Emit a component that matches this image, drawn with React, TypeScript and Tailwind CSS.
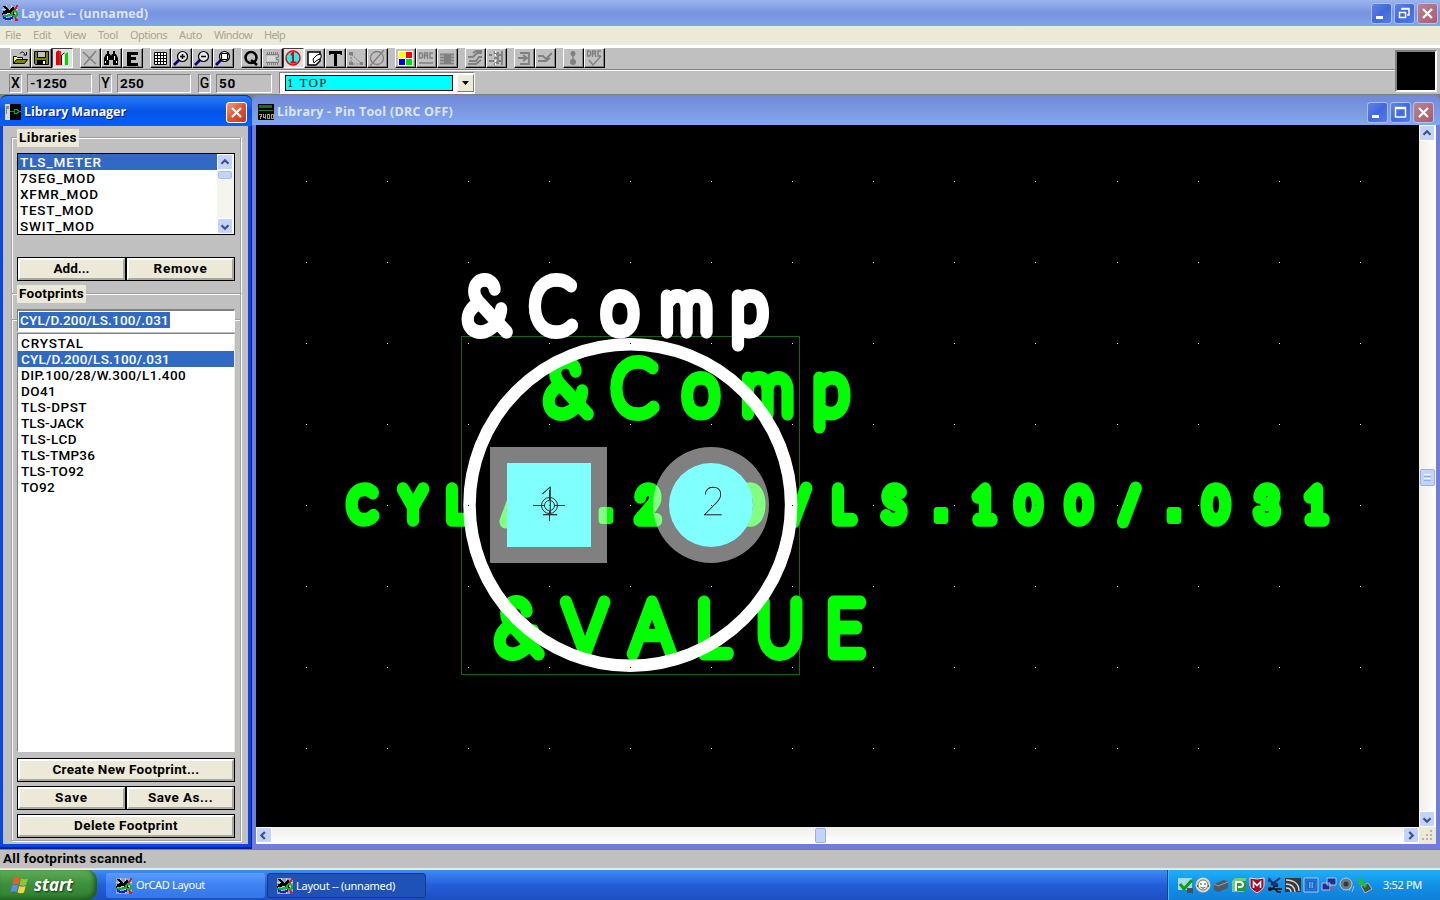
import React, { useLayoutEffect, useRef, useState } from "react";

const sys = "font-['Roboto','Liberation_Sans',sans-serif] font-bold text-[13.5px] leading-4";
const listText = "font-['Roboto','Liberation_Sans',sans-serif] font-medium text-[13.5px] leading-4";
const tahoma = "font-['Noto_Sans','Open_Sans',sans-serif] text-[11px]";
const caption = "font-['Open_Sans','Noto_Sans',sans-serif] text-[12.5px] font-bold";

/* Spreads the letters so that a label takes exactly w pixels. */
function Fit({ w, children, className = "" }: { w: number; children: string; className?: string }) {
  const ref = useRef<HTMLSpanElement>(null);
  const [ls, setLs] = useState(0);
  useLayoutEffect(() => {
    if (ref.current) {
      const nat = ref.current.getBoundingClientRect().width;
      setLs((w - nat) / children.length);
    }
  }, []);
  return (
    <span ref={ref} className={"inline-block whitespace-pre " + className} style={{ letterSpacing: ls + "px" }}>
      {children}
    </span>
  );
}

function AppIcon() {
  return (
    <svg width="16" height="16" viewBox="0 0 16 16" shapeRendering="crispEdges" className="shrink-0">
      <rect width="16" height="16" fill="#8fa0c8" />
      <path d="M0 4h16M0 8h16M4 0v16M9 0v16" stroke="#c8d4ee" />
      <path d="M0 1h3l5 4 2-3h2v5l1 3-3 1-3-3-4 1-2-3 3-1z" fill="#000" />
      <path d="M0 9l4-2" stroke="#000" strokeWidth="2" />
      <path d="M16 0l-3 4v2M13 11l1 4h2" fill="none" stroke="#d81828" strokeWidth="2" />
      <circle cx="12.500" cy="8.500" r="2.500" fill="none" stroke="#18b028" strokeWidth="2" />
      <path d="M0 11h5l5-2" fill="none" stroke="#18b028" strokeWidth="2" />
      <path d="M1 12l3 2h4l3-2" fill="none" stroke="#1020e0" strokeWidth="2" />
    </svg>
  );
}

type CapKind = "min" | "restore" | "max" | "close";
function CapBtn({ kind, active = false }: { kind: CapKind; active?: boolean }) {
  const bg =
    kind === "close"
      ? active
        ? "bg-linear-to-br from-[#f09a80] via-[#dd5433] to-[#c03a18] border-white"
        : "bg-linear-to-br from-[#b98297] to-[#ac5b68] border-[#b4c4f0]"
      : "bg-linear-to-br from-[#6283e4] via-[#4168e0] to-[#4f7cec] border-[#a9c0f4]";
  return (
    <div className={"flex h-[21px] w-[21px] items-center justify-center rounded-[3px] border " + bg}>
      <svg width="19" height="19" viewBox="0 0 19 19" fill="none" stroke="#fff">
        {kind === "min" && <path d="M4 13.500h7" strokeWidth="3" />}
        {kind === "restore" && (
          <>
            <path d="M7 6V4.500h7V11h-2M7 5h7.500" strokeWidth="1.500" />
            <path d="M4.500 8.500h6v5h-6zM4 8.500h7" strokeWidth="1.500" />
          </>
        )}
        {kind === "max" && <path d="M4.500 4.500h10v9.500h-10zM4 5.500h11" strokeWidth="1.500" />}
        {kind === "close" && <path d="M5 5l9 9M14 5l-9 9" strokeWidth="2.200" />}
      </svg>
    </div>
  );
}

const G = "#808080";
const zoomBase = (
  <>
    <path d="M2 16l5-5" stroke="#000080" strokeWidth="2.600" />
    <circle cx="10.500" cy="7.500" r="5" fill="#e8e8e8" stroke="#000" strokeWidth="1.200" />
  </>
);
const tools: React.ReactNode[][] = [
  [
    <g key="open"><path d="M2.500 14.500v-7h3l1 1h5v3" fill="#ffff60" stroke="#000" /><path d="M2.500 14.500l3-4h11l-3 4z" fill="#808000" stroke="#000" /><path d="M9 4.500c1-2 4-2 5 1M15.500 3v3h-3" fill="none" stroke="#000" /></g>,
    <g key="save"><path d="M2.500 2.500h14v13h-13l-1-1z" fill="#808000" stroke="#000" /><path d="M5.500 2.500h8v6h-8z" fill="#c0c0c0" stroke="#000" /><path d="M5 11h9v5H5z" fill="#000" /><path d="M11 12h2v3h-2z" fill="#fff" /></g>,
    <g key="lib"><path d="M3 3l3-2v15H3z" fill="#e00000" /><path d="M6 2h2v14H6z" fill="#f01818" /><path d="M8 6l3-2v12H8z" fill="#fff" /><path d="M8.500 16V6l3-2" stroke="#000" /><path d="M12 5l3-2v13h-3z" fill="#00d800" /></g>,
  ],
  [
    <path key="x" d="M2 3l13 12M15 2L3 16" stroke={G} strokeWidth="1.600" />,
    <g key="find"><path d="M5 2h2v3H5zM11 2h2v3h-2zM4 5h4l1 2 1-2h4l2 4v7h-5v-5H7v5H2V9z" fill="#000" /><path d="M5.500 7v4M12.500 7v4M3.500 12v2M14.500 12v2" stroke="#fff" /></g>,
    <path key="e" d="M4 3h11v3H8v2h5v3H8v3h7v3H4z" fill="#000" />,
  ],
  [
    <g key="grid"><path d="M3 3h13v13H3z" fill="#fff" /><path d="M3.500 3.500h12v12h-12zM3 6.500h13M3 9.500h13M3 12.500h13M6.500 3v13M9.500 3v13M12.500 3v13" fill="none" stroke="#000" /></g>,
    <g key="zi">{zoomBase}<path d="M8 7.500h5M10.500 5v5" stroke="#000" strokeWidth="1.500" /></g>,
    <g key="zo">{zoomBase}<path d="M8 7.500h5" stroke="#000" strokeWidth="1.500" /></g>,
    <g key="za">{zoomBase}<path d="M7.500 4.500h6v6h-6z" fill="#fff" stroke="#000" /></g>,
  ],
  [
    <g key="q"><circle cx="9" cy="8.500" r="5.500" fill="none" stroke="#000" strokeWidth="2.500" /><path d="M9 11l6 5" stroke="#000" strokeWidth="2.500" /></g>,
    <g key="chip"><path d="M3 5.500h12.500v3h-2v2h2v3H3" fill="none" stroke={G} /><path d="M4 7h8v5H4z" fill="#d8d8d8" /><path d="M4.500 3v2M6.500 3v2M8.500 3v2M10.500 3v2M12.500 3v2M14.500 3v2M4.500 14v2M6.500 14v2M8.500 14v2M10.500 14v2M12.500 14v2M14.500 14v2" stroke={G} /></g>,
    <g key="pin"><circle cx="9" cy="9" r="7" fill="#00ffff" stroke="#ff0000" strokeWidth="1.500" /><path d="M7 6l2-2v9M6.500 13.500h6" fill="none" stroke="#f00000" strokeWidth="2" /></g>,
    <g key="obs"><path d="M3 3h12v9l-4 4H3z" fill="#fff" stroke="#000" strokeWidth="1.500" /><path d="M9 14l-1-4 4-4 4-1v4l-5 3z" fill="#fff" stroke="#000" /></g>,
    <path key="t" d="M3 2h13v4h-1l-1-1h-3v12H8V5H5L4 6H3z" fill="#000" />,
    <g key="conn"><path d="M4 5v10h11z" fill="none" stroke={G} strokeDasharray="2 1" /><path d="M2 3h4v3H2zM2 13h4v3H2zM13 13h3v3h-3z" fill={G} /></g>,
    <g key="err"><circle cx="9" cy="9" r="6.500" fill="none" stroke={G} strokeWidth="1.300" /><path d="M2 17L16 1" stroke={G} strokeWidth="1.300" /></g>,
  ],
  [
    <g key="col"><path d="M2 2h15v15H2z" fill="#fff" /><path d="M3 3h6v6H3z" fill="#ffff00" /><path d="M10 3h6v6h-6z" fill="#f00" /><path d="M3 10h6v6H3z" fill="#0000e0" /><path d="M10 10h6v6h-6z" fill="#00e000" /></g>,
    <g key="drc"><path d="M2.500 4v5h2l1-1V5l-1-1zM7.500 10V4h3v2.500h-3M10 7l1 3M16 4h-3v5h3M2 14h14" fill="none" stroke={G} strokeWidth="1.400" /></g>,
    <g key="rec"><path d="M6 5h7v10H6z" fill={G} /><path d="M2 5.500h14M2 8.500h14M2 11.500h14M2 14.500h14" stroke={G} strokeWidth="2" /></g>,
  ],
  [
    <path key="ar" d="M2 8h5l4-4h5M3 12h7l3-4h3M2 15h8l5-4M7 4l3-2h6" fill="none" stroke={G} strokeWidth="1.800" />,
    <g key="sh"><path d="M2 6h3M2 12h5M12 6h3M11 12h4M7 9h4M7 3l3 3M7 16l3-3M11 3v12M15 2v14" stroke={G} strokeWidth="1.800" /><path d="M8.500 2v5M8.500 11v5" stroke="#fff" strokeDasharray="2 1" /></g>,
  ],
  [
    <g key="ed"><path d="M5 4h9v11H5M3 9h8M8 6l4 3-4 3" fill="none" stroke={G} strokeWidth="1.800" /></g>,
    <g key="ad"><path d="M2 7h5l3 3 6-6M2 12h8l4-3" fill="none" stroke={G} strokeWidth="1.800" /></g>,
  ],
  [
    <g key="un"><path d="M9 3v12" stroke={G} strokeWidth="1.500" /><circle cx="9" cy="4.500" r="2.500" fill={G} /><circle cx="9" cy="13" r="3" fill={G} /></g>,
    <g key="dr"><path d="M2.500 2v5h2l1-1V3l-1-1zM7.500 8V2h3v2.500h-3M10 5l1 3M16 2h-3v5h3M4 11l4 5 8-9" fill="none" stroke={G} strokeWidth="1.400" /></g>,
  ],
];

function Field({ label, value, lw, vw }: { label: string; value: string; lw: number; vw: number }) {
  return (
    <div className="flex gap-[5px]">
      <div className="flex h-[19px] w-[13px] items-center justify-center border border-t-[#808080] border-l-[#808080] border-r-white border-b-white font-['Roboto'] text-[14px] font-medium">
        {label}
      </div>
      <div
        className={"h-[19px] border border-t-[#808080] border-l-[#808080] border-r-white border-b-white pl-[2px] " + sys}
        style={{ width: vw }}
      >
        <Fit w={lw}>{value}</Fit>
      </div>
    </div>
  );
}

function Push({ children, w, tw }: { children: string; w: number; tw: number }) {
  return (
    <div className="border border-black" style={{ width: w }}>
      <div
        className={
          "flex h-[22px] items-center justify-center border-2 border-t-white border-l-white border-r-[#aca899] border-b-[#aca899] bg-[#ece9d8] pb-[2px] " + sys
        }
      >
        <Fit w={tw}>{children}</Fit>
      </div>
    </div>
  );
}

function Arrow({ dir }: { dir: "up" | "down" | "left" | "right" }) {
  const d = { up: "M4 9l4-4 4 4", down: "M4 6l4 4 4-4", left: "M9 3.500L5 7.500l4 4", right: "M6 3.500l4 4-4 4" }[dir];
  return (
    <div className="flex h-[16px] w-[16px] shrink-0 items-center justify-center rounded-[2px] border border-white bg-[#c3d3fc]">
      <svg width="15" height="15" viewBox="0 0 16 15" fill="none" stroke="#3f5484" strokeWidth="2.600">
        <path d={d} />
      </svg>
    </div>
  );
}

const libs: [string, number][] = [["TLS_METER", 82], ["7SEG_MOD", 76], ["XFMR_MOD", 79], ["TEST_MOD", 74], ["SWIT_MOD", 75]];
const foots: [string, number][] = [
  ["CRYSTAL", 63], ["CYL/D.200/LS.100/.031", 149], ["DIP.100/28/W.300/L1.400", 165], ["DO41", 35], ["TLS-DPST", 66],
  ["TLS-JACK", 63], ["TLS-LCD", 56], ["TLS-TMP36", 74], ["TLS-TO92", 63], ["TO92", 34],
];

function Legend({ children, w }: { children: string; w: number }) {
  return (
    <div className={"absolute -top-[9px] left-[5px] h-[18px] bg-[#ece9d8] px-[2px] " + sys}>
      <Fit w={w}>{children}</Fit>
    </div>
  );
}

function LibraryManager() {
  return (
    <section className="flex h-[754px] w-[252px] shrink-0 flex-col rounded-t-[7px] border-r border-b-2 border-[#0a1f9a] bg-[#0a46e0]">
      <div className="-mr-px flex h-[31px] shrink-0 items-center rounded-t-[7px] border-t border-[#0831a8] bg-linear-to-b from-[#2a7af8] via-[#0553e6] to-[#0460f8] pt-[2px] pr-[5px] pl-[5px]">
        <svg width="16" height="16" viewBox="0 0 16 16" shapeRendering="crispEdges">
          <path d="M0 0h16v16H0z" fill="#000" />
          <path d="M0 0h5v16H0z" fill="#d8d8d8" />
          <path d="M1 2h3v3H1zM1 5h1v5H1z" fill="#888" />
          <path d="M5 7.500h4M14 7.500h2M9 5.500h3l2 2-2 2H9z" fill="none" stroke="#00a020" />
        </svg>
        <span className={"ml-[3px] flex-1 pt-px text-white [text-shadow:1px_1px_#0a1883] " + caption}>
          <Fit w={102}>Library Manager</Fit>
        </span>
        <CapBtn kind="close" active />
      </div>
      <div className="mr-[3px] mb-[3px] ml-[3px] flex flex-1 flex-col bg-[#c0c0c0] pt-[11px] pr-[7px] pl-[8px]">
        <div className="relative h-[156px] border border-b-0 border-[#a0a0a0] px-[5px] pt-[15px] shadow-[inset_1px_1px_#fff,1px_0_#fff]">
          <Legend w={58}>Libraries</Legend>
          <div className="flex h-[82px] w-[218px] border border-black bg-white">
            <div className="flex-1">
              {libs.map(([t, w], i) => (
                <div key={t} className={"h-4 pl-[2px] " + listText + (i === 0 ? " bg-[#316ac5] text-white" : "")}>
                  <Fit w={w}>{t}</Fit>
                </div>
              ))}
            </div>
            <div className="flex w-[17px] flex-col bg-[#f5f4ee]">
              <Arrow dir="up" />
              <div className="mt-px ml-px h-[8px] w-[14px] rounded-[2px] border border-[#a8bff0] bg-[#c3d3fc]" />
              <div className="flex-1" />
              <Arrow dir="down" />
            </div>
          </div>
          <div className="mt-[22px] flex">
            <Push w={109} tw={36}>Add...</Push>
            <Push w={109} tw={54}>Remove</Push>
          </div>
        </div>
        <div className="relative h-[548px] border border-[#a0a0a0] px-[5px] pt-[15px] shadow-[inset_1px_1px_#fff,1px_1px_#fff]">
          <Legend w={65}>Footprints</Legend>
          <div className="absolute top-[25px] right-0 left-0 h-[2px] border-t border-b border-t-[#a0a0a0] border-b-white" />
          <div className="relative flex h-[23px] w-[218px] items-center border border-t-2 border-t-[#808080] border-l-[#808080] border-r-white border-b-white bg-white pb-[2px] pl-[1px]">
            <span className={"flex h-4 bg-[#316ac5] px-px text-white " + listText}>
              <Fit w={149}>CYL/D.200/LS.100/.031</Fit>
            </span>
          </div>
          <div className="mt-px h-[419px] w-[218px] border border-t-[#808080] border-l-[#808080] border-r-[#ece9d8] border-b-white bg-white pt-px">
            {foots.map(([t, w], i) => (
              <div key={t} className={"h-4 pl-[3px] " + listText + (i === 1 ? " bg-[#316ac5] text-white" : "")}>
                <Fit w={w}>{t}</Fit>
              </div>
            ))}
          </div>
          <div className="mt-[6px] flex flex-col gap-[4px]">
            <Push w={218} tw={147}>Create New Footprint...</Push>
            <div className="flex">
              <Push w={109} tw={33}>Save</Push>
              <Push w={109} tw={65}>Save As...</Push>
            </div>
            <Push w={218} tw={104}>Delete Footprint</Push>
          </div>
        </div>
      </div>
    </section>
  );
}

/* Silkscreen lettering: a hairline face under a heavy round pen, every
   character centred on its own x, condensed horizontally by SX. */
const SX = 0.88;
function Silk({ text, xs, y, size, stroke, fill }: { text: string; xs: number[]; y: number; size: number; stroke: number; fill: string }) {
  return (
    <text
      transform={"scale(" + SX + " 1)"}
      y={y}
      fill={fill}
      stroke={fill}
      strokeWidth={stroke}
      strokeLinejoin="round"
      strokeLinecap="round"
      textAnchor="middle"
      fontFamily="Lato"
      fontWeight="100"
      fontSize={size}
    >
      {text.split("").map((c, i) =>
        c === "." ? (
          <tspan key={i} x={xs[i] / SX} fontFamily="Liberation Sans" fontWeight="700" fontSize={size * 1.4} strokeWidth={8}>
            {c}
          </tspan>
        ) : (
          <tspan key={i} x={xs[i] / SX}>
            {c}
          </tspan>
        )
      )}
    </text>
  );
}

const dotX = [306, 387, 468, 549, 630, 711, 792, 873, 954, 1035, 1117, 1198, 1279, 1360];
const dotY = [181, 262, 343, 424, 505, 586, 667, 748];

function Board() {
  return (
    <svg width="1163" height="702" viewBox="256 125 1163 702" className="block bg-black">
      <g className="isolate">
        <rect x="461.500" y="336.500" width="338" height="338" fill="none" stroke="#146414" />
        <Silk text="&Comp" xs={[567, 634, 701, 767.5, 831]} y={414.5} size={75} stroke={13} fill="#00ff00" />
        <Silk text="&VALUE" xs={[518, 585, 652, 712.5, 780, 845]} y={654.5} size={75} stroke={13} fill="#00ff00" />
        <Silk
          text="CYL/D.200/LS.100/.031"
          xs={[362, 413, 457, 512, 560, 606, 648, 700, 750, 800, 843, 894, 941, 984, 1028.500, 1079, 1129.500, 1174, 1216, 1267, 1316]}
          y={520.5} size={44} stroke={13.5} fill="#00ff00"
        />
        <g fill="#808080" className="mix-blend-screen">
          <rect x="490" y="447" width="117" height="116" />
          <circle cx="711" cy="505" r="58" />
        </g>
        <rect x="507" y="463" width="84" height="84" fill="#80ffff" />
        <circle cx="711" cy="505" r="42" fill="#80ffff" />
        <circle cx="630.300" cy="505" r="160.800" fill="none" stroke="#fff" strokeWidth="12.500" />
        <Silk text="&Comp" xs={[486, 552.5, 620, 686.5, 749.5]} y={332.5} size={75} stroke={13} fill="#fff" />
        <g fill="#000" stroke="#000" strokeWidth=".3" fontFamily="Lato" fontSize="40" fontWeight="100" textAnchor="middle">
          <text x="549" y="515">1</text>
          <text x="713" y="515">2</text>
        </g>
        <g fill="none" stroke="#303030">
          <circle cx="549.500" cy="505.500" r="8" />
          <circle cx="549.500" cy="505.500" r="5" />
          <path d="M533 505.500h12M554 505.500h11M549.500 490v10M549.500 511v10M544 514.500h10" />
        </g>
        <g fill="#fff" className="mix-blend-difference">
          {dotY.map((y) => dotX.map((x) => <rect key={x + "-" + y} x={x} y={y} width="1" height="1" />))}
        </g>
      </g>
    </svg>
  );
}

function PinWindow() {
  return (
    <section className="flex h-[754px] flex-1 flex-col rounded-t-[7px] bg-[#6f7fd8] pr-[4px] pl-[4px]">
      <div className="-mx-[4px] flex h-[30px] shrink-0 items-center rounded-t-[7px] bg-linear-to-b from-[#7088d8] via-[#7a98e2] to-[#82a7ed] pt-[4px] pr-[6px] pl-[6px]">
        <svg width="16" height="16" viewBox="0 0 16 16" shapeRendering="crispEdges">
          <path d="M0 0h16v16H0z" fill="#000" />
          <path d="M1 1h13v3H1z" fill="#206828" />
          <path d="M1 6.500h14" stroke="#208830" />
          <path d="M1 10h3l-2 5M5 10v3h3M7 10v5M9 10h2v4H9zM13 10h2v4h-2z" fill="none" stroke="#b8a830" />
        </svg>
        <span className={"ml-[3px] flex-1 pt-px text-[#dbe5fb] " + caption}>
          <Fit w={176}>Library - Pin Tool (DRC OFF)</Fit>
        </span>
        <div className="flex gap-[2px]">
          <CapBtn kind="min" />
          <CapBtn kind="max" />
          <CapBtn kind="close" />
        </div>
      </div>
      <div className="flex h-[702px]">
        <Board />
        <div className="flex w-[17px] flex-col bg-linear-to-r from-[#f0efe8] to-white">
          <Arrow dir="up" />
          <div className="mt-[328px] ml-px flex h-[17px] w-[15px] flex-col items-center justify-center gap-px rounded-[2px] border border-[#98b0e8] bg-[#c3d3fc]">
            <div className="h-px w-[7px] bg-[#eef4fe]" />
            <div className="h-px w-[7px] bg-[#8cb0f8]" />
            <div className="h-px w-[7px] bg-[#eef4fe]" />
            <div className="h-px w-[7px] bg-[#8cb0f8]" />
          </div>
          <div className="flex-1" />
          <Arrow dir="down" />
        </div>
      </div>
      <div className="flex h-[17px] w-[1180px] bg-linear-to-b from-[#f0efe8] to-white">
        <Arrow dir="left" />
        <div className="mt-px ml-[543px] h-[15px] w-[11px] rounded-[2px] border border-[#98b0e8] bg-[#c3d3fc]" />
        <div className="flex-1" />
        <Arrow dir="right" />
        <div className="flex w-[17px] items-end justify-end bg-[#ece9d8] p-[2px]">
          <svg width="12" height="12" fill="#b8b4a2">
            <path d="M8 0h2v2H8zM4 4h2v2H4zM8 4h2v2H8zM0 8h2v2H0zM4 8h2v2H4zM8 8h2v2H8z" />
          </svg>
        </div>
      </div>
    </section>
  );
}

const tray = [
  <g key="a"><path d="M1 1h14v12H1z" fill="#a8d8e8" /><path d="M10 11h6v5h-6z" fill="#405060" /><path d="M3 7l4 5 8-9" fill="none" stroke="#08a010" strokeWidth="3" /></g>,
  <g key="b"><circle cx="8" cy="8" r="7.500" fill="#d8d8c0" /><path d="M2 9h12" stroke="#706030" strokeWidth="2" /><circle cx="8" cy="8" r="5" fill="#fff" stroke="#807850" /><path d="M6 6v2M10 6v2M5.500 10c2 1.500 3 1.500 5 0" stroke="#444" fill="none" /></g>,
  <g key="c"><path d="M1 7l10-4 4 2v6L5 15l-4-2z" fill="#505860" /><path d="M1 7l4 2 10-4" stroke="#98a0a8" fill="none" /></g>,
  <g key="d"><path d="M1 4l3-3h11v12l-3 2H1z" fill="#78c880" /><path d="M4 4h11v10H4z" fill="#289838" /><path d="M5 14V5h4c4 0 4 5 0 5H7" fill="none" stroke="#fff" strokeWidth="2" /></g>,
  <g key="e"><path d="M1 1l7 1 7-1v7c0 4-4 6-7 8-3-2-7-4-7-8z" fill="#a80820" stroke="#e8e8e8" /><path d="M4.500 11V5L8 8.500 11.500 5v6" fill="none" stroke="#fff" strokeWidth="1.600" /></g>,
  <g key="f"><path d="M2 1l5 8M13 1L4 8M1 3l10 5" stroke="#0c3070" strokeWidth="2" /><path d="M1 12h14M5 12l3-3h3M8 12l3 3h3" fill="none" stroke="#101010" strokeWidth="1.500" /><circle cx="3" cy="12" r="2" fill="#101010" /></g>,
  <g key="g"><path d="M0 1h16v14H0z" fill="#383838" /><path d="M1 3c8 0 13 4 13 11M1 7c5 0 9 3 9 8M1 11c3 0 5 1 5 4" fill="none" stroke="#d8d8d8" strokeWidth="1.500" /></g>,
  <g key="h"><path d="M1 1h14v14H1z" fill="#1060b8" stroke="#a8d0f8" /><path d="M3 3h10v10H3z" fill="#1868c8" stroke="#2c80d8" /><path d="M6 6h4M6 8h4M6 10h4" stroke="#c0e0ff" strokeDasharray="1 .5" /></g>,
  <g key="i"><path d="M6 1h9v7H6zM1 6h8v7H1z" fill="#203090" stroke="#b8c0e0" /><path d="M9 10h5v4H9z" fill="#6070b0" /></g>,
  <g key="j"><circle cx="7" cy="7" r="6" fill="#707880" stroke="#c0c8d0" /><circle cx="7" cy="7" r="2.500" fill="#303840" /><path d="M10 14l2-4M13 15l2-6" stroke="#a0c0f0" /></g>,
  <g key="k"><path d="M4 9l7-3 4 6-7 4z" fill="#405048" stroke="#b0b8b0" /><path d="M1 1l6 2-1 2 4 3-2 3-4-4-2 1z" fill="#20c030" /></g>,
];

export default function App() {
  return (
    <div className="flex h-[900px] w-[1440px] flex-col overflow-hidden bg-[#c0c0c0] text-black">
      <header className="flex h-[26px] shrink-0 items-center bg-linear-to-b from-[#9db5ee] via-[#7893df] to-[#80a5ec] pr-[2px] pl-[2px]">
        <AppIcon />
        <span className={"ml-[3px] flex-1 pt-[2px] text-[#dbe5fb] " + caption}>
          <Fit w={127}>Layout -- (unnamed)</Fit>
        </span>
        <div className="flex gap-[2px]">
          <CapBtn kind="min" />
          <CapBtn kind="restore" />
          <CapBtn kind="close" />
        </div>
      </header>
      <nav className={"flex h-[19px] shrink-0 items-center bg-[#ece9d8] pl-[5px] text-[#a9a594] " + tahoma}>
        <Fit w={16} className="mr-[12px]">File</Fit>
        <Fit w={18} className="mr-[13px]">Edit</Fit>
        <Fit w={22} className="mr-[12px]">View</Fit>
        <Fit w={20} className="mr-[12px]">Tool</Fit>
        <Fit w={37} className="mr-[12px]">Options</Fit>
        <Fit w={23} className="mr-[12px]">Auto</Fit>
        <Fit w={38} className="mr-[12px]">Window</Fit>
        <Fit w={21}>Help</Fit>
      </nav>
      <div className="flex h-[49px] shrink-0 border-t-[3px] border-white">
        <div className="flex flex-1 flex-col">
          <div className="flex h-[22px] gap-[7px] border-b border-[#808080] pl-[10px]">
            {tools.map((grp, gi) => (
              <div key={gi} className="flex">
                {grp.map((ic, i) => {
                  const pressed = (gi === 0 && i === 2) || (gi === 3 && i === 2);
                  return (
                    <div
                      key={i}
                      className={
                        "h-[20px] w-[21px] border " +
                        (pressed
                          ? "border-t-[#404040] border-l-[#404040] border-r-white border-b-white bg-[#e0e0e0]"
                          : "border-t-white border-l-white border-r-black border-b-black bg-[#c0c0c0] shadow-[inset_-1px_-1px_#808080]")
                      }
                    >
                      <svg width="18" height="18" viewBox="0 0 18 18" fill="none">{ic}</svg>
                    </div>
                  );
                })}
              </div>
            ))}
          </div>
          <div className="flex h-[24px] items-start border-t border-white pt-px pl-[9px]">
            <div className="flex gap-[7px] pt-[2px]">
              <Field label="X" value="-1250" lw={37} vw={65} />
              <Field label="Y" value="250" lw={24} vw={74} />
              <Field label="G" value="50" lw={17} vw={56} />
            </div>
            <div className="ml-[7px] flex h-[22px] w-[196px] border border-t-[#808080] border-l-[#808080] border-r-white border-b-white bg-white py-px">
              <div className="mt-px ml-[5px] h-[16px] w-[168px] border border-black bg-[#00ffff] pl-px font-['Liberation_Serif'] text-[13px] leading-[14px]">
                <Fit w={41}>1 TOP</Fit>
              </div>
              <div className="ml-auto flex h-[18px] w-[17px] items-center justify-center border border-t-white border-l-white border-r-[#808080] border-b-[#808080] bg-[#ece9d8]">
                <svg width="7" height="4"><path d="M0 0h7L3.500 4z" fill="#000" /></svg>
              </div>
            </div>
          </div>
        </div>
        <div className="mt-[2px] mr-[3px] h-[42px] w-[42px] border-2 border-t-[#808080] border-l-[#808080] border-r-white border-b-white bg-black" />
      </div>
      <main className="flex h-[755px] shrink-0 bg-[#808080] pt-px pr-[3px]">
        <LibraryManager />
        <PinWindow />
      </main>
      <footer className={"flex h-[21px] shrink-0 items-center border-t border-b-2 border-t-[#808080] border-b-[#ece9d8] pb-[2px] pl-[3px] " + sys}>
        <Fit w={144}>All footprints scanned.</Fit>
      </footer>
      <div className="flex h-[30px] shrink-0 bg-linear-to-b from-[#3f8cf3] via-[#245edb] to-[#1d4fc0]">
        <div className="flex w-[97px] items-center rounded-r-[10px] bg-linear-to-b from-[#5eac56] via-[#3c8f3c] to-[#2f7f30] pl-[10px] shadow-[inset_-3px_-2px_4px_#1e5c1e]">
          <svg width="20" height="19" viewBox="0 0 20 19">
            <path d="M4 2c2-2 4-1 6 0L8.500 8.500c-2-1-4-1-6 0z" fill="#f0592a" />
            <path d="M11 2.500c2 1 4 1 7 0L16 9c-2 1-4 1-6.500 0z" fill="#8cc63f" />
            <path d="M2.200 9.500c2-1 4-1 6 0L6.500 16c-2-1-4-1-6 0z" fill="#5a8df0" />
            <path d="M9.200 10c2 1 4 1 6.500 0L14 16.500c-2 1-4 1-6.500 0z" fill="#fbd03c" />
          </svg>
          <Fit w={39} className="ml-[4px] font-['Open_Sans'] text-[17px] leading-5 font-bold text-white italic [text-shadow:1px_1px_2px_#103810]">start</Fit>
        </div>
        <div className={"mt-[3px] ml-[9px] flex h-[25px] w-[159px] items-center rounded-[3px] bg-linear-to-b from-[#5a9bfb] via-[#3c81f3] to-[#3577e8] pl-[10px] text-white " + tahoma}>
          <AppIcon />
          <Fit w={69} className="ml-[4px]">OrCAD Layout</Fit>
        </div>
        <div className={"mt-[3px] ml-[2px] flex h-[25px] w-[159px] items-center rounded-[3px] border border-[#153a88] bg-[#1e52b7] pl-[9px] text-white " + tahoma}>
          <AppIcon />
          <Fit w={99} className="ml-[3px] pt-px">Layout -- (unnamed)</Fit>
        </div>
        <div className="flex-1" />
        <div className="flex w-[273px] items-center border-l border-[#0c3a8c] bg-linear-to-b from-[#1fb0f8] via-[#1290e8] to-[#1080d8] pl-[9px] shadow-[inset_1px_0_#34bffb]">
          <div className="flex gap-[2px]">
            {tray.map((t, i) => (
              <svg key={i} width="16" height="16" viewBox="0 0 16 16" fill="none">{t}</svg>
            ))}
          </div>
          <Fit w={39} className={"ml-[10px] text-white " + tahoma}>3:52 PM</Fit>
        </div>
      </div>
    </div>
  );
}
